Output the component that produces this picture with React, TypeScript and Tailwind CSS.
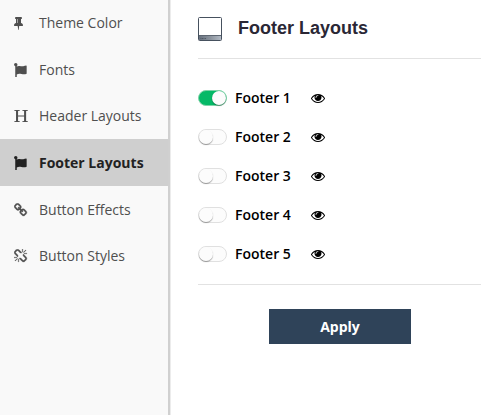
const pin =
  'M800 864v-448q0-14-9-23t-23-9-23 9-9 23v448q0 14 9 23t23 9 23-9 9-23zm672 352q0 26-19 45t-45 19h-429l-51 483q-2 12-10.5 20.5t-20.5 8.5h-1q-27 0-32-27l-76-485h-404q-26 0-45-19t-19-45q0-123 78.5-221.500t177.500-98.500v-512q-52 0-90-38t-38-90 38-90 90-38h640q52 0 90 38t38 90-38 90-90 38v512q99 0 177.500 98.500t78.500 221.500z';
const flag =
  'M448 224Q448 320 352 384V448Q540 340 740 390Q980 450 1180 410Q1400 350 1570 330Q1620 330 1620 390V1330Q1620 1390 1550 1400Q1340 1470 1120 1430Q880 1370 700 1390Q500 1410 352 1480V1792H160V410Q0 330 0 224A224 224 0 0 1 448 224Z';
const header =
  'M40 128H740V220L520 255V840H1290V255L1070 220V128H1770V220L1550 255V1537L1770 1572V1664H1070V1572L1290 1537V950H520V1537L740 1572V1664H40V1572L260 1537V255L40 220Z';
const chain =
  'M1520 1216q0-40-28-68l-208-208q-28-28-68-28-42 0-72 32 3 3 19 18.500t21.500 21.500 15 19 13 25.500 3.500 27.500q0 40-28 68t-68 28q-15 0-27.500-3.500t-25.500-13-19-15-21.500-21.500-18.500-19q-33 31-33 73 0 40 28 68l206 207q27 27 68 27 40 0 68-26l147-146q28-28 28-67zm-703-705q0-40-28-68l-206-207q-28-28-68-28-39 0-68 27l-147 146q-28 28-28 67 0 40 28 68l208 208q27 27 68 27 42 0 72-31-3-3-19-18.500t-21.500-21.500-15-19-13-25.500-3.500-27.500q0-40 28-68t68-28q15 0 27.500 3.500t25.500 13 19 15 21.500 21.500 18.500 19q33-31 33-73zm895 705q0 120-85 203l-147 146q-83 83-203 83-121 0-204-85l-206-207q-83-83-83-203 0-123 88-209l-88-88q-86 88-208 88-120 0-204-84l-208-208q-84-84-84-204t85-203l147-146q83-83 203-83 121 0 204 85l206 207q83 83 83 203 0 123-88 209l88 88q86-88 208-88 120 0 204 84l208 208q84 84 84 204z';
const brokenChain =
  'M503 1271l-256 256q-10 9-23 9-12 0-23-9-9-10-9-23t9-23l256-256q10-9 23-9t23 9q9 10 9 23t-9 23zm169 41v320q0 14-9 23t-23 9-23-9-9-23v-320q0-14 9-23t23-9 23 9 9 23zm-224-224q0 14-9 23t-23 9h-320q-14 0-23-9t-9-23 9-23 23-9h320q14 0 23 9t9 23zm1264 128q0 120-85 203l-147 146q-83 83-203 83-121 0-204-85l-334-335q-21-21-42-56l239-18 273 274q28 28 68 27.500t68-27.500l147-146q28-28 28-67 0-40-28-68l-274-275 18-239q35 21 56 42l336 336q84 86 84 204zm-617-724l-239 18-273-274q-28-28-68-28-39 0-68 27l-147 146q-28 28-28 67 0 40 28 68l274 274-18 240q-35-21-56-42l-336-336q-84-86-84-204 0-120 85-203l147-146q83-83 203-83 121 0 204 85l334 335q21 21 42 56zm633 84q0 14-9 23t-23 9h-320q-14 0-23-9t-9-23 9-23 23-9h320q14 0 23 9t9 23zm-544-544v320q0 14-9 23t-23 9-23-9-9-23v-320q0-14 9-23t23-9 23 9 9 23zm407 151l-256 256q-11 9-23 9t-23-9q-9-10-9-23t9-23l256-256q10-9 23-9t23 9q9 10 9 23t-9 23z';
const eye =
  'M1664 960q-152-236-381-353 61 104 61 225 0 185-131.500 316.500t-316.500 131.500-316.500-131.500-131.500-316.500q0-121 61-225-229 117-381 353 133 205 333.500 326.500t434.500 121.500 434.500-121.500 333.500-326.500zm-720-384q0-20-14-34t-34-14q-125 0-214.500 89.500t-89.500 214.500q0 20 14 34t34 14 34-14 14-34q0-86 61-147t147-61q20 0 34-14t14-34zm848 384q0 34-20 69-140 230-376.500 368.500t-499.500 138.500-499.500-139-376.500-368q-20-35-20-69t20-69q140-229 376.500-368t499.500-139 499.500 139 376.500 368q20 35 20 69z';

const menu = [
  { label: 'Theme Color', icon: pin, box: '320 0 1792 1792', row: 'h-[46px]' },
  { label: 'Fonts', icon: flag, box: '0 0 1792 1792', row: 'h-[47px]' },
  { label: 'Header Layouts', icon: header, box: '0 0 1792 1792', row: 'h-[46px]' },
  { label: 'Footer Layouts', icon: flag, box: '0 0 1792 1792', row: 'h-[47px]', active: true },
  { label: 'Button Effects', icon: chain, box: '64 0 1792 1792', row: 'h-[47px]', bold: true },
  { label: 'Button Styles', icon: brokenChain, box: '64 0 1792 1792', row: 'h-[46px]', bold: true },
];

function Icon({ path, box = '0 0 1792 1792', bold }: { path: string; box?: string; bold?: boolean }) {
  return (
    <svg viewBox={box} className="size-3.5 shrink-0 fill-current">
      <path d={path} stroke={bold ? 'currentColor' : 'none'} strokeWidth="45" />
    </svg>
  );
}

function Toggle({ on }: { on: boolean }) {
  return (
    <span
      className={`flex h-4 w-[29px] shrink-0 items-center rounded-full border ${
        on ? 'justify-end border-[#7fd3a8] bg-[#05b967]' : 'border-[#e0e0e0] bg-[#fcfcfc]'
      }`}
    >
      <span className="size-3.5 rounded-full bg-[#fcfcfc] shadow-[0_1px_1px_rgba(0,0,0,0.35)]" />
    </span>
  );
}

function FooterIcon() {
  return (
    <svg viewBox="0 0 24 24" className="size-6 shrink-0">
      <defs>
        <linearGradient id="bar" x1="0" x2="1" y1="0" y2="0">
          <stop offset="0" stopColor="#68727f" />
          <stop offset="0.5" stopColor="#8a929c" />
          <stop offset="1" stopColor="#b2bac4" />
        </linearGradient>
      </defs>
      <rect x="0.5" y="0.5" width="23" height="23" rx="1" fill="#fff" />
      <rect x="1" y="18" width="22" height="5" fill="url(#bar)" />
      <path d="M1 18.5H23" stroke="#5d6671" />
      <path d="M2.500 21.500H8" stroke="#48515c" strokeWidth="0.8" strokeDasharray="1 .5" />
      <rect x="0.5" y="0.5" width="23" height="23" rx="1" fill="none" stroke="#46515e" />
    </svg>
  );
}

export default function App() {
  return (
    <div className="flex h-[415px] w-[493px] overflow-hidden bg-white font-['Open_Sans',sans-serif] text-sm">
      <nav className="w-[170px] shrink-0 border-r-2 border-[#d0d0d0] bg-[#f9f9f9] shadow-[1px_0_0_#ececec]">
        {menu.map((m) => (
          <div
            key={m.label}
            className={`flex items-center gap-[11px] pl-3.5 ${m.row} ${
              m.active ? 'bg-[#cfcfcf] font-bold text-[#222]' : 'text-[#4f4f4f]'
            }`}
          >
            <Icon path={m.icon} box={m.box} bold={m.bold} />
            <span className="whitespace-nowrap">{m.label}</span>
          </div>
        ))}
      </nav>
      <main className="ml-7 w-[283px]">
        <header className="flex h-[59px] items-center gap-4 border-b border-[#e2e2e2]">
          <FooterIcon />
          <h1 className="pb-0.5 font-['Liberation_Sans',sans-serif] text-lg font-bold text-[#2a2735]">Footer Layouts</h1>
        </header>
        <ul className="border-b border-[#e2e2e2] pt-[19px] pb-[11px]">
          {[1, 2, 3, 4, 5].map((n) => (
            <li key={n} className="flex h-[39px] items-center text-black">
              <Toggle on={n === 1} />
              <span className="ml-2 w-[76px] font-semibold">Footer {n}</span>
              <Icon path={eye} />
            </li>
          ))}
        </ul>
        <button className="mt-6 ml-[71px] block h-[35px] w-[142px] bg-[#2f4359] font-bold text-white">Apply</button>
      </main>
    </div>
  );
}
